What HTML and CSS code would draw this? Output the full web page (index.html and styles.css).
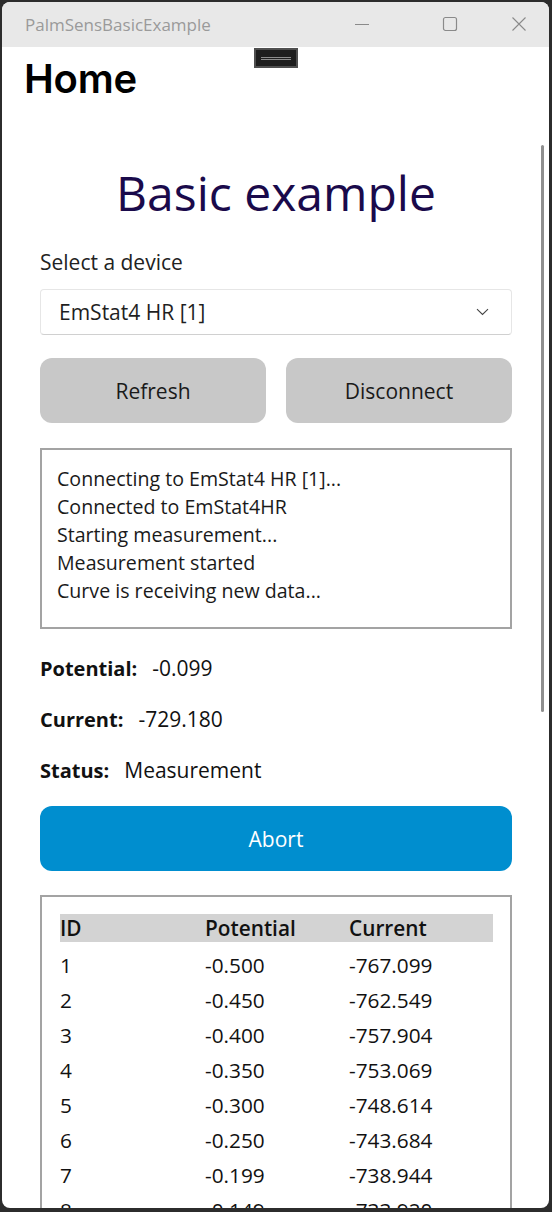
FILE: index.html
```html
<!DOCTYPE html>
<html>
<head>
<meta charset="utf-8">
<link rel="stylesheet" href="styles.css">
</head>
<body>
<div class="window">
  <div class="titlebar">
    <span class="app-title">PalmSensBasicExample</span>
    <div class="controls">
      <span class="ctl"><svg width="16" height="16" viewBox="0 0 16 16"><path d="M1 8.5H15" stroke="#8a8a8a" stroke-width="1"/></svg></span>
      <span class="ctl"><svg width="16" height="16" viewBox="0 0 16 16"><rect x="1.5" y="1.5" width="13" height="13" rx="2" fill="none" stroke="#8a8a8a" stroke-width="1.2"/></svg></span>
      <span class="ctl"><svg width="16" height="16" viewBox="0 0 16 16"><path d="M1.5 1.5L14.5 14.5M14.5 1.5L1.5 14.5" stroke="#8a8a8a" stroke-width="1.1"/></svg></span>
    </div>
  </div>
  <div class="content">
    <div class="debugbar"><span class="dline"></span><span class="dline"></span></div>
    <div class="scrollthumb"></div>
    <h1 class="page-title">Home</h1>
    <div class="page">
      <h2 class="heading">Basic example</h2>
      <div class="label">Select a device</div>
      <div class="picker">
        <span>EmStat4 HR [1]</span>
        <svg width="13" height="8" viewBox="0 0 13 8"><path d="M1 1.2L6.5 6.5L12 1.2" fill="none" stroke="#444" stroke-width="1.1"/></svg>
      </div>
      <div class="btnrow">
        <div class="btn gray">Refresh</div>
        <div class="btn gray">Disconnect</div>
      </div>
      <div class="log">
        <div>Connecting to EmStat4 HR [1]...</div>
        <div>Connected to EmStat4HR</div>
        <div>Starting measurement...</div>
        <div>Measurement started</div>
        <div>Curve is receiving new data...</div>
      </div>
      <div class="field f1"><b>Potential:</b><span>-0.099</span></div>
      <div class="field"><b>Current:</b><span>-729.180</span></div>
      <div class="field"><b>Status:</b><span>Measurement</span></div>
      <div class="btn blue">Abort</div>
      <div class="tablebox">
        <div class="trow thead"><span>ID</span><span>Potential</span><span>Current</span></div>
        <div class="trow first"><span>1</span><span>-0.500</span><span>-767.099</span></div>
        <div class="trow"><span>2</span><span>-0.450</span><span>-762.549</span></div>
        <div class="trow"><span>3</span><span>-0.400</span><span>-757.904</span></div>
        <div class="trow"><span>4</span><span>-0.350</span><span>-753.069</span></div>
        <div class="trow"><span>5</span><span>-0.300</span><span>-748.614</span></div>
        <div class="trow"><span>6</span><span>-0.250</span><span>-743.684</span></div>
        <div class="trow"><span>7</span><span>-0.199</span><span>-738.944</span></div>
        <div class="trow"><span>8</span><span>-0.149</span><span>-733.920</span></div>
      </div>
    </div>
  </div>
</div>
</body>
</html>
```
FILE: styles.css
```css
html, body {
  margin: 0;
  padding: 0;
}
body {
  background: #2c2c2c;
  width: 552px;
  height: 1212px;
  overflow: hidden;
  font-family: "Open Sans", "Noto Sans", sans-serif;
}
.window {
  margin: 2px 0 0 2px;
  width: 547px;
  height: 1206px;
  background: #ffffff;
  border-radius: 8px;
  overflow: hidden;
  display: flex;
  flex-direction: column;
}
.titlebar {
  height: 45px;
  flex: none;
  background: #e8e8e8;
  display: flex;
  align-items: center;
  justify-content: space-between;
}
.app-title {
  margin-left: 23px;
  font-family: "Open Sans", sans-serif;
  font-size: 17px;
  color: #9a9a9a;
  padding-bottom: 1px;
}
.controls {
  display: flex;
  margin-right: 22px;
}
.ctl {
  display: flex;
  width: 16px;
  height: 16px;
  padding-bottom: 2px;
}
.ctl:nth-child(2) { margin-left: 72px; }
.ctl:nth-child(3) { margin-left: 53px; }
.content {
  position: relative;
  flex: 1;
  overflow: hidden;
}
.debugbar {
  position: absolute;
  left: 252px;
  top: 1px;
  width: 40px;
  height: 16px;
  background: #1e1e1e;
  border: 2px solid #4f4f4f;
  display: flex;
  flex-direction: column;
  justify-content: center;
  align-items: center;
  gap: 1px;
}
.dline {
  display: block;
  width: 30px;
  height: 1px;
  background: #8c8c8c;
}
.scrollthumb {
  position: absolute;
  left: 539px;
  top: 98px;
  width: 3px;
  height: 567px;
  border-radius: 2px;
  background: #8f8f8f;
}
.page-title {
  margin: 8px 0 0 22px;
  font-family: Inter, "Open Sans", sans-serif;
  font-weight: 600;
  font-size: 40px;
  line-height: 48px;
  color: #000;
  letter-spacing: -0.2px;
}
.page {
  width: 472px;
  margin-left: 38px;
  display: flex;
  flex-direction: column;
}
.heading {
  margin: 57px 0 0 0;
  text-align: center;
  font-weight: 400;
  font-size: 48px;
  line-height: 65px;
  color: #1a0a4b;
}
.label {
  margin-top: 23px;
  font-size: 21px;
  line-height: 28px;
  color: #222;
}
.picker {
  margin-top: 13px;
  height: 46px;
  box-sizing: border-box;
  border: 1px solid #e6e6e6;
  border-bottom-color: #d0d0d0;
  border-radius: 4px;
  display: flex;
  align-items: center;
  justify-content: space-between;
  padding: 0 22px 0 18px;
  font-size: 21px;
  color: #1f1f1f;
}
.picker span { padding-bottom: 1px; }
.btnrow {
  margin-top: 23px;
  display: grid;
  grid-template-columns: 1fr 1fr;
  gap: 20px;
}
.btn {
  height: 65px;
  border-radius: 12px;
  display: flex;
  align-items: center;
  justify-content: center;
  font-size: 21px;
}
.btn.gray {
  background: #c8c8c8;
  color: #1a1a1a;
}
.btn.blue {
  margin-top: 22px;
  background: #008ecf;
  color: #fff;
}
.log {
  margin-top: 25px;
  height: 181px;
  box-sizing: border-box;
  border: 2px solid #a3a3a3;
  padding: 15px 0 0 15px;
  font-family: "Open Sans", sans-serif;
  font-size: 19.6px;
  line-height: 28px;
  color: #1a1a1a;
}
.field {
  margin-top: 23px;
  height: 28px;
  font-size: 21px;
  line-height: 28px;
  color: #111;
  display: flex;
  align-items: baseline;
  overflow: visible;
}
.field.f1 { margin-top: 25px; }
.field b {
  font-size: 20px;
  font-weight: 700;
  margin-right: 15px;
}
.tablebox {
  margin-top: 24px;
  border: 2px solid #a3a3a3;
  padding: 17px 17px 0 18px;
  height: 400px;
}
.trow {
  display: grid;
  grid-template-columns: 145px 144px 1fr;
  font-size: 20.8px;
  line-height: 35px;
  color: #111;
}
.trow.thead {
  background: #d3d3d3;
  line-height: 28px;
  font-weight: 600;
  margin-bottom: 6px;
}
```
